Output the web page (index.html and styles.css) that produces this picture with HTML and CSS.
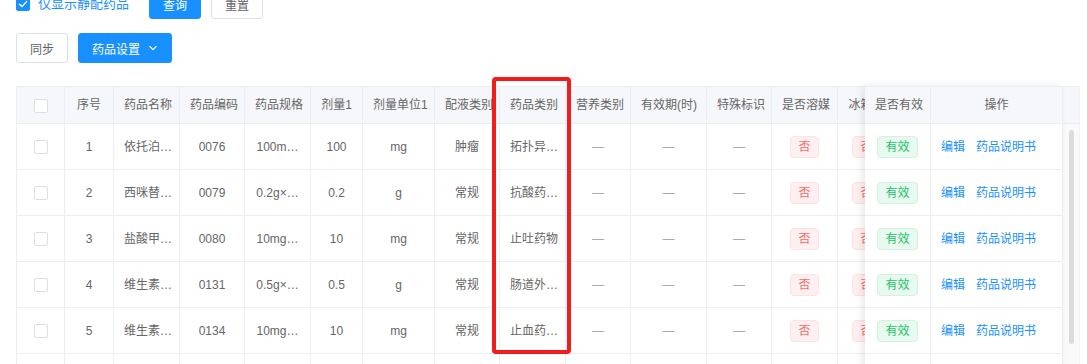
FILE: index.html
```html
<!DOCTYPE html>
<html lang="zh-CN">
<head>
  <meta charset="UTF-8" />
  <meta name="viewport" content="width=device-width, initial-scale=1.0" />
  <title>药品维护</title>
  <link rel="stylesheet" href="styles.css">
</head>
<body>
  <div class="page">
    <div class="toolbar toolbar-top">
      <label class="check-label">
        <span class="checkbox checked">
          <svg viewBox="0 0 14 14" width="14" height="14"><path d="M3.5 7.2 L6 9.6 L10.6 4.6" fill="none" stroke="#fff" stroke-width="1.4" stroke-linecap="round" stroke-linejoin="round"/></svg>
        </span>
        <span class="check-text">仅显示静配药品</span>
      </label>
      <button class="btn btn-primary btn-query">查询</button>
      <button class="btn">重置</button>
    </div>

    <div class="toolbar toolbar-actions">
      <button class="btn">同步</button>
      <button class="btn btn-primary">药品设置
        <svg class="chevron" viewBox="0 0 10 10" width="10" height="10"><path d="M1.5 3.2 L5 6.7 L8.5 3.2" fill="none" stroke="#fff" stroke-width="1.2"/></svg>
      </button>
    </div>

    <div class="table-wrap">
      <div class="table-main">
        <table class="grid grid-main">
          <colgroup>
            <col style="width:48px"><col style="width:49px"><col style="width:66px"><col style="width:65px">
            <col style="width:66px"><col style="width:52px"><col style="width:72px"><col style="width:65px">
            <col style="width:66px"><col style="width:65px"><col style="width:76px"><col style="width:65px">
            <col style="width:66px"><col style="width:58px">
          </colgroup>
          <thead>
            <tr>
              <th><span class="checkbox"></span></th>
              <th>序号</th><th>药品名称</th><th>药品编码</th><th>药品规格</th><th>剂量1</th><th>剂量单位1</th>
              <th>配液类别</th><th>药品类别</th><th>营养类别</th><th>有效期(时)</th><th>特殊标识</th>
              <th>是否溶媒</th><th>冰箱药</th>
            </tr>
          </thead>
          <tbody>
            <tr>
              <td><span class="checkbox"></span></td>
              <td>1</td><td>依托泊…</td><td>0076</td><td>100m…</td><td>100</td><td>mg</td>
              <td>肿瘤</td><td>拓扑异…</td><td class="empty">—</td><td class="empty">—</td><td class="empty">—</td>
              <td><span class="tag tag-no">否</span></td><td><span class="tag tag-no">否</span></td>
            </tr>
            <tr>
              <td><span class="checkbox"></span></td>
              <td>2</td><td>西咪替…</td><td>0079</td><td>0.2g×…</td><td>0.2</td><td>g</td>
              <td>常规</td><td>抗酸药…</td><td class="empty">—</td><td class="empty">—</td><td class="empty">—</td>
              <td><span class="tag tag-no">否</span></td><td><span class="tag tag-no">否</span></td>
            </tr>
            <tr>
              <td><span class="checkbox"></span></td>
              <td>3</td><td>盐酸甲…</td><td>0080</td><td>10mg…</td><td>10</td><td>mg</td>
              <td>常规</td><td>止吐药物</td><td class="empty">—</td><td class="empty">—</td><td class="empty">—</td>
              <td><span class="tag tag-no">否</span></td><td><span class="tag tag-no">否</span></td>
            </tr>
            <tr>
              <td><span class="checkbox"></span></td>
              <td>4</td><td>维生素…</td><td>0131</td><td>0.5g×…</td><td>0.5</td><td>g</td>
              <td>常规</td><td>肠道外…</td><td class="empty">—</td><td class="empty">—</td><td class="empty">—</td>
              <td><span class="tag tag-no">否</span></td><td><span class="tag tag-no">否</span></td>
            </tr>
            <tr>
              <td><span class="checkbox"></span></td>
              <td>5</td><td>维生素…</td><td>0134</td><td>10mg…</td><td>10</td><td>mg</td>
              <td>常规</td><td>止血药…</td><td class="empty">—</td><td class="empty">—</td><td class="empty">—</td>
              <td><span class="tag tag-no">否</span></td><td><span class="tag tag-no">否</span></td>
            </tr>
            <tr>
              <td><span class="checkbox"></span></td>
              <td>6</td><td>氯化钠…</td><td>0140</td><td>0.9%…</td><td>100</td><td>ml</td>
              <td>常规</td><td>溶媒</td><td class="empty">—</td><td class="empty">—</td><td class="empty">—</td>
              <td><span class="tag tag-no">否</span></td><td><span class="tag tag-no">否</span></td>
            </tr>
          </tbody>
        </table>
      </div>

      <div class="table-fixed">
        <table class="grid grid-fixed">
          <colgroup>
            <col style="width:66px"><col style="width:132px">
          </colgroup>
          <thead>
            <tr><th>是否有效</th><th>操作</th></tr>
          </thead>
          <tbody>
            <tr><td><span class="tag tag-yes">有效</span></td><td class="ops"><a>编辑</a><a>药品说明书</a></td></tr>
            <tr><td><span class="tag tag-yes">有效</span></td><td class="ops"><a>编辑</a><a>药品说明书</a></td></tr>
            <tr><td><span class="tag tag-yes">有效</span></td><td class="ops"><a>编辑</a><a>药品说明书</a></td></tr>
            <tr><td><span class="tag tag-yes">有效</span></td><td class="ops"><a>编辑</a><a>药品说明书</a></td></tr>
            <tr><td><span class="tag tag-yes">有效</span></td><td class="ops"><a>编辑</a><a>药品说明书</a></td></tr>
            <tr><td><span class="tag tag-yes">有效</span></td><td class="ops"><a>编辑</a><a>药品说明书</a></td></tr>
          </tbody>
        </table>
      </div>

      <div class="gutter">
        <div class="gutter-head"></div>
        <div class="gutter-track"><div class="gutter-thumb"></div></div>
      </div>
    </div>

    <div class="highlight"></div>
  </div>
</body>
</html>
```

FILE: styles.css
```css
body, html {
  margin: 0;
  padding: 0;
  height: 100%;
  overflow: hidden;
  background: #fff;
  color: #666;
  font-family: "Liberation Sans", "Noto Sans CJK SC", sans-serif;
  font-size: 12px;
}
.page {
  position: relative;
  display: flex;
  flex-direction: column;
  padding: 0 16px;
}
.toolbar {
  display: flex;
  align-items: center;
  gap: 10px;
}
.toolbar-top {
  margin-top: -11px;
}
.toolbar-actions {
  margin-top: 14px;
}
.check-label {
  display: flex;
  align-items: center;
  gap: 8px;
  margin-right: 10px;
  cursor: pointer;
}
.check-text {
  color: #1890ff;
  font-size: 13px;
  line-height: 20px;
}
.checkbox {
  display: inline-block;
  width: 14px;
  height: 14px;
  box-sizing: border-box;
  border: 1px solid #dcdfe6;
  border-radius: 2px;
  background: #fff;
  vertical-align: middle;
}
.checkbox.checked {
  background: #1890ff;
  border-color: #1890ff;
}
.checkbox.checked svg {
  display: block;
  margin: -1px;
}
.btn {
  display: inline-flex;
  align-items: center;
  gap: 8px;
  height: 30px;
  padding: 0 13px;
  font-family: inherit;
  font-size: 12px;
  color: #606266;
  background: #fff;
  border: 1px solid #dcdfe6;
  border-radius: 3px;
  cursor: pointer;
}
.btn-primary {
  color: #fff;
  background: #1890ff;
  border-color: #1890ff;
}
.chevron {
  display: block;
}
.table-wrap {
  display: flex;
  margin-top: 23px;
  width: 1063px;
}
.table-main {
  flex: 0 0 849px;
  overflow: hidden;
}
.grid {
  border-collapse: separate;
  border-spacing: 0;
  table-layout: fixed;
}
.grid-main {
  width: 879px;
  border-top: 1px solid #ebeef5;
  border-left: 1px solid #ebeef5;
}
.grid-main col:first-child {
  width: 47px;
}
.grid th, .grid td {
  padding: 0 10px;
  text-align: center;
  white-space: nowrap;
  overflow: hidden;
  border-right: 1px solid #ebeef5;
  border-bottom: 1px solid #ebeef5;
  font-weight: 400;
  line-height: 20px;
}
.grid th {
  height: 36px;
  background: #f5f7fa;
  color: #666;
}
.grid td {
  height: 45px;
  background: #fff;
}
.grid td.empty {
  color: #a8abb2;
}
.table-fixed {
  position: relative;
  flex: 0 0 198px;
  box-shadow: -3px 0 8px rgba(0, 0, 0, 0.09);
  z-index: 1;
}
.grid-fixed {
  width: 198px;
  border-top: 1px solid #ebeef5;
}
.grid-fixed td.ops {
  text-align: left;
}
.ops a {
  color: #1890ff;
  margin-right: 11px;
  cursor: pointer;
}
.tag {
  display: inline-block;
  height: 22px;
  line-height: 20px;
  padding: 0 7px;
  box-sizing: border-box;
  border: 1px solid;
  border-radius: 4px;
  font-size: 12px;
}
.tag-no {
  color: #f56c6c;
  background: #fef0f0;
  border-color: #fde2e2;
}
.tag-yes {
  color: #25c26a;
  background: #e8f9ef;
  border-color: #d1f2df;
}
.gutter {
  flex: 0 0 16px;
  display: flex;
  flex-direction: column;
  border-right: 1px solid #f2f3f5;
}
.gutter-head {
  height: 36px;
  background: #f5f7fa;
  border-top: 1px solid #ebeef5;
  border-bottom: 1px solid #ebeef5;
}
.gutter-track {
  flex: 1;
  background: #fafafa;
  padding: 6px 0 0 6px;
}
.gutter-thumb {
  width: 5px;
  height: 214px;
  border-radius: 3px;
  background: #dcdcdc;
}
.highlight {
  position: absolute;
  left: 492px;
  top: 77px;
  width: 79px;
  height: 277px;
  box-sizing: border-box;
  border: 4px solid #f21c1c;
  border-radius: 4px;
  pointer-events: none;
}
```
